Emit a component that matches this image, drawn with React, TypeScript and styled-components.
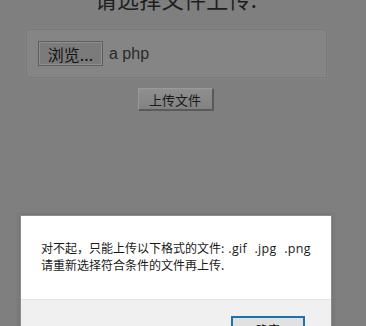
import React from "react";
import styled, { createGlobalStyle } from "styled-components";

const Global = createGlobalStyle`
  html, body { margin: 0; padding: 0; }
  body {
    background: #7f7f7f;
    width: 366px;
    height: 326px;
    overflow: hidden;
    font-family: "Microsoft YaHei", "Noto Sans CJK SC", "Liberation Sans", sans-serif;
  }
`;

const Page = styled.div`
  position: relative;
  width: 366px;
  height: 326px;
  overflow: hidden;
  display: flex;
  flex-direction: column;
  align-items: center;
`;

const Heading = styled.h2`
  margin: -17px 0 0 -14px;
  font-size: 22px;
  line-height: 30px;
  font-weight: normal;
  color: #1e1e1e;
  letter-spacing: 0.3px;
`;

const FormBox = styled.div`
  margin-top: 16px;
  margin-left: -13px;
  width: 301px;
  height: 49px;
  box-sizing: border-box;
  border: 1px solid #797979;
  outline: 1px solid #838383;
  background: #858585;
  display: flex;
  align-items: center;
  padding-left: 11px;
  gap: 6px;
`;

const Browse = styled.button`
  width: 65px;
  height: 25px;
  box-sizing: border-box;
  background: #7b7b7b;
  border: 1px solid #5e5e5e;
  box-shadow: inset 0 0 0 1px #8e8e8e;
  font-family: inherit;
  font-size: 16px;
  color: #141414;
  padding: 0;
`;

const FileName = styled.span`
  font-family: "Liberation Sans", Arial, sans-serif;
  font-size: 16px;
  color: #2a2a2a;
`;

const Upload = styled.button`
  margin-top: 10px;
  margin-left: -15px;
  width: 76px;
  height: 23px;
  box-sizing: border-box;
  background: linear-gradient(#8f8f8f, #828282);
  border: 1px solid #6a6a6a;
  border-top-color: #9a9a9a;
  border-left-color: #9a9a9a;
  border-right: 2px solid #5a5a5a;
  border-bottom: 2px solid #5a5a5a;
  font-family: inherit;
  font-size: 13px;
  color: #1a1a1a;
  padding: 0;
`;

const Dialog = styled.div`
  position: absolute;
  left: 21px;
  top: 216px;
  width: 310px;
  height: 130px;
  background: #ffffff;
  box-shadow: 0 0 0 1px #8c8c8c, 0 0 4px 2px rgba(0, 0, 0, 0.12);
  display: flex;
  flex-direction: column;
`;

const Message = styled.div`
  height: 83px;
  box-sizing: border-box;
  padding: 24px 0 0 20px;
  font-size: 12px;
  line-height: 16px;
  color: #1a1a1a;
`;

const Ext = styled.span`
  font-family: "Open Sans", "Liberation Sans", sans-serif;
  font-size: 12.5px;
  word-spacing: 4px;
  letter-spacing: 0.3px;
  margin-left: 4px;
`;

const Footer = styled.div`
  flex: 1;
  background: #f0f0f0;
  border-top: 1px solid #e6e6e6;
  display: flex;
  justify-content: flex-end;
  padding: 16px 26px 0 0;
`;

const OkButton = styled.button`
  width: 74px;
  height: 26px;
  box-sizing: border-box;
  background: #e1e1e1;
  border: 2px solid #1f6fa8;
  font-family: inherit;
  font-size: 12px;
  color: #111;
  padding: 0;
`;

export default function App() {
  return (
    <>
      <Global />
      <Page>
        <Heading>请选择文件上传:</Heading>
        <FormBox>
          <Browse>浏览...</Browse>
          <FileName>a php</FileName>
        </FormBox>
        <Upload>上传文件</Upload>
        <Dialog>
          <Message>
            对不起，只能上传以下格式的文件:<Ext>.gif .jpg .png</Ext>
            <br />
            请重新选择符合条件的文件再上传.
          </Message>
          <Footer>
            <OkButton>确定</OkButton>
          </Footer>
        </Dialog>
      </Page>
    </>
  );
}
